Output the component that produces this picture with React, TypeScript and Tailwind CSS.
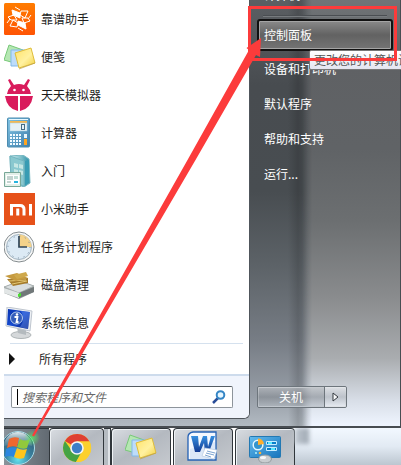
import React from 'react';

function KaopuIcon() {
  return (
    <svg viewBox="0 0 32 32" className="w-8 h-8">
      <defs>
        <linearGradient id="kaopu" x1="0" y1="0" x2="0" y2="1">
          <stop offset="0" stopColor="#ff7c00" />
          <stop offset="1" stopColor="#ff5404" />
        </linearGradient>
      </defs>
      <rect x="0" y="0" width="31" height="32" rx="1.5" fill="url(#kaopu)" />
      <g transform="translate(15 16)" stroke="#fff" strokeWidth="1" strokeLinejoin="round">
        <path d="M-7-9 1-6 1-1-6-4Z" fill="#fff" />
        <path d="M2-8 9-8 6-1 1-4Z" fill="none" />
        <path d="M7 10-1 6-1 2 6 4Z" fill="#fff" />
        <path d="M-2 8-9 7-6 1-1 4Z" fill="none" />
        <path d="M-11-2-5-4-2 1-8 1Z" fill="none" />
        <path d="M11 2 5 4 3-1 9-1Z" fill="none" />
        <path d="M-4-12 1-9M4 12l-5-3M12-4 9 0M-12 4l3-4" fill="none" />
      </g>
    </svg>
  );
}

function NotesIcon({ className = 'w-8 h-8' }: { className?: string }) {
  return (
    <svg viewBox="0 0 32 32" className={className}>
      <defs>
        <linearGradient id="noteYellow" x1="0" y1="0" x2="1" y2="1">
          <stop offset="0" stopColor="#ffe36b" />
          <stop offset=".55" stopColor="#fff1a0" />
          <stop offset="1" stopColor="#f3cf3d" />
        </linearGradient>
      </defs>
      <path d="M5 4 19 9 14 23 0 19Z" fill="#b5e7b2" stroke="#78c879" />
      <path d="M7 9H21V25H7Z" fill="#bddcfa" stroke="#83b9e8" />
      <path d="m11 12 16-5 4 15-16 5Z" fill="url(#noteYellow)" stroke="#dfbd39" />
      <path d="m15 28 16-6" stroke="#bda14b" strokeWidth=".7" />
    </svg>
  );
}

function BugIcon() {
  return (
    <svg viewBox="0 0 32 32" className="w-8 h-8" fill="#d91b5c">
      <path d="m4 1 2-1 4 6q5-2 10 0l4-6 2 1-3 6q3 3 4 8H3q1-5 4-8Z" />
      <path d="M1 17h13v15Q3 30 1 17ZM16 17h13q-2 13-13 15Z" />
      <circle cx="10.500" cy="11" r="1.300" fill="#fff" />
      <circle cx="19.500" cy="11" r="1.300" fill="#fff" />
    </svg>
  );
}

function CalculatorIcon() {
  return (
    <svg viewBox="0 0 32 32" className="w-8 h-8">
      <defs>
        <linearGradient id="calc" x1="0" y1="0" x2="1" y2="1">
          <stop offset="0" stopColor="#7fc3e4" />
          <stop offset="1" stopColor="#3f7fac" />
        </linearGradient>
      </defs>
      <rect x="3.500" y="1" width="22" height="29" rx="1" fill="url(#calc)" stroke="#4d8caf" />
      <path d="M5 2h19v1H5z" fill="#eaf9ff" />
      <rect x="6" y="4" width="17" height="2" fill="#f2b955" />
      <rect x="6" y="6" width="17" height="8" fill="#e5f1f6" stroke="#a6cddd" strokeWidth=".5" />
      <rect x="17.500" y="7.500" width="3" height="5" fill="none" stroke="#426c83" />
      <path d="M6 18h12M6 21h12M6 24h12M6 27h12" stroke="#f3fbff" strokeWidth="2" strokeDasharray="2 1" />
      <path d="M20 17h3v4h-3z" fill="#e9f6fc" />
      <path d="M20 22h3v6h-3z" fill="#ffa41f" />
    </svg>
  );
}

function GettingStartedIcon() {
  return (
    <svg viewBox="0 0 32 32" className="w-8 h-8">
      <defs>
        <linearGradient id="folder">
          <stop offset="0" stopColor="#d8f1f3" />
          <stop offset=".6" stopColor="#75bac5" />
          <stop offset="1" stopColor="#278ca7" />
        </linearGradient>
      </defs>
      <path d="M6 1 19 0 25 4 26 28 20 32 7 27Z" fill="url(#folder)" stroke="#78b8c2" />
      <path d="M6 1 20 6V31L7 26Z" fill="#8ac8cf" stroke="#73b4bf" />
      <path d="m10 8 4 1v4l-4-1zm5 1 4 1v4l-4-1zm-5 5 4 1v4l-4-1zm5 1 4 1v4l-4-1z" fill="#dff3ed" opacity=".7" />
      <path d="M21 6 25 5V27L21 31Z" fill="#389cb3" />
      <path d="M.5 17.500h16v14H.5z" fill="#e2efe8" stroke="#78a797" />
      <path d="M2 20h13v9H2z" fill="#fff" />
      <path d="M3 22h6M3 24h6M3 27h4" stroke="#87a8a0" />
      <path d="M10 21h4v3h-4z" fill="#bfddd4" />
      <path d="M10 26h4v2h-4z" fill="#26b4df" />
    </svg>
  );
}

function MiIcon() {
  return (
    <svg viewBox="0 0 32 32" className="w-8 h-8">
      <path d="M0 0h31v32H0z" fill="#e65119" />
      <path d="M7.500 22.500v-10H16q4 0 4 4v6M13.750 15.500v7M26.500 11v11.500" stroke="#fff" strokeWidth="3" fill="none" />
    </svg>
  );
}

function ClockIcon() {
  return (
    <svg viewBox="0 0 32 32" className="w-8 h-8">
      <circle cx="15" cy="16" r="15" fill="#f7f8f8" stroke="#848b8e" />
      <circle cx="15" cy="16" r="12.500" fill="#dceaf5" stroke="#a2b4c0" />
      <path d="M15 16V3.500A12.500 12.500 0 0 1 27.500 16Z" fill="#f4d28a" />
      <circle cx="15" cy="16" r="11" fill="none" stroke="#71869a" strokeWidth="1" strokeDasharray="1 4.760" />
      <path d="M15 5v11h8" fill="none" stroke="#304558" strokeWidth="1.700" />
    </svg>
  );
}

function DiskIcon() {
  return (
    <svg viewBox="0 0 32 32" className="w-8 h-8">
      <path d="m0 18 16-6 14 5v6l-15 7L0 24Z" fill="#969e9f" />
      <path d="m0 18 16-6 14 5-15 7Z" fill="#d9dedf" stroke="#a9b0b0" />
      <path d="m0 19 15 5v5L0 24Z" fill="#e2e6e6" />
      <path d="m15 24 15-6v5l-15 6Z" fill="#717879" />
      <path d="m14 25 3-1v3l-3 1Z" fill="#4be130" />
      <path d="m3 10 21-1v5L9 17Z" fill="#a67c2b" />
      <path d="M5 12 22 11M8 15l15-3" stroke="#e3c774" />
      <path d="m1 7 12-3 11 5-12 3Z" fill="#c69b40" />
      <path d="m10 6 12-3 2 4-11 3Z" fill="#cfa94c" />
    </svg>
  );
}

function SystemInfoIcon() {
  return (
    <svg viewBox="0 0 32 32" className="w-8 h-8">
      <defs>
        <linearGradient id="screen" x1="0" y1="0" x2="1" y2="1">
          <stop offset="0" stopColor="#0732b0" />
          <stop offset=".5" stopColor="#164bd0" />
          <stop offset="1" stopColor="#071c78" />
        </linearGradient>
      </defs>
      <ellipse cx="17" cy="28" rx="10" ry="3.500" fill="#d5d8da" stroke="#aeb4b6" />
      <path d="m13 20 9 2v6l-8-2Z" fill="#b4babe" />
      <path d="m3 0 25 4-2 20-24-5Z" fill="#edf0f4" stroke="#bec5ce" />
      <path d="m4 2 22 3-2 17-21-4Z" fill="url(#screen)" />
      <path d="m17 4 9 1-2 17-8-2q6-8 1-16Z" fill="#638ee8" opacity=".45" />
      <circle cx="12.500" cy="11" r="6" fill="#345dba" stroke="#b7ccec" />
      <circle cx="13" cy="7.500" r="1.300" fill="#fff" />
      <path d="M10.500 10h3l-1 5h2" fill="none" stroke="#fff" strokeWidth="1.800" />
    </svg>
  );
}

function StartOrb() {
  return (
    <svg viewBox="0 0 36 36" className="w-9 h-9">
      <defs>
        <radialGradient id="orb" cx=".5" cy=".85" r=".8">
          <stop offset="0" stopColor="#62e1ee" />
          <stop offset=".5" stopColor="#387f9d" />
          <stop offset="1" stopColor="#355a70" />
        </radialGradient>
        <linearGradient id="orbGloss" x1="0" y1="0" x2="0" y2="1">
          <stop offset="0" stopColor="#e4eef1" />
          <stop offset="1" stopColor="#8bafbd" stopOpacity=".25" />
        </linearGradient>
        <radialGradient id="orbGlow">
          <stop offset="0" stopColor="#5bea65" stopOpacity=".8" />
          <stop offset="1" stopColor="#5bea65" stopOpacity="0" />
        </radialGradient>
      </defs>
      <circle cx="14" cy="18" r="16.500" fill="url(#orb)" stroke="#a8dbe8" />
      <path d="M0 16a14 14 0 0 1 28 0q-14-4-28 0Z" fill="url(#orbGloss)" />
      <path d="M5 9q5-3 10-1l-2 9q-5-2-10 1Z" fill="#ef6730" />
      <path d="M16 9q5 3 10 0l-3 9q-4 2-10-1Z" fill="#92c83c" />
      <path d="M2 19q5-3 10-1l-2 9q-5-2-9 0Z" fill="#2b86df" />
      <path d="M13 18q5 3 10 1l-3 9q-5 2-10-1Z" fill="#ffc51c" />
      <circle cx="28" cy="8" r="8" fill="url(#orbGlow)" />
    </svg>
  );
}

function ChromeIcon() {
  return (
    <svg viewBox="0 0 32 32" className="w-8 h-8">
      <circle cx="16" cy="17" r="14" fill="#fbd02d" />
      <path d="M16 17 3.900 10A14 14 0 0 1 28.500 10.500H16Z" fill="#df4032" />
      <path d="M3.900 10A14 14 0 0 0 15 31l6-11-10 0Z" fill="#44a344" />
      <path d="M16 10.500h12.500A14 14 0 0 1 15 31l7-11Z" fill="#fbd02d" />
      <circle cx="16" cy="17" r="6.800" fill="#f5f5f5" />
      <circle cx="16" cy="17" r="5.200" fill="#3d7fc8" />
    </svg>
  );
}

function WordIcon() {
  return (
    <svg viewBox="0 0 32 32" className="w-8 h-8">
      <defs>
        <linearGradient id="word" x1="0" y1="0" x2="0" y2="1">
          <stop offset="0" stopColor="#368fe0" />
          <stop offset="1" stopColor="#123a92" />
        </linearGradient>
      </defs>
      <path d="M6 1h23v28H1V6q0-4 5-5Z" fill="#f4f8fe" stroke="#2461b4" strokeWidth="1.300" />
      <path d="M3 18 28 11v17H3Z" fill="#dce8f8" />
      <path d="M4 5h7l1 11 4-11h4l1 11 3-11h4l-6 16h-4l-1-9-4 9H8Z" fill="url(#word)" />
      <path d="m18 17 12 2-3 9-12-3Z" fill="#fff" stroke="#b9cbe1" strokeWidth=".7" />
      <path d="m20 20 8 2m-9 0 8 2m-9 0 6 2" stroke="#7da4d0" />
    </svg>
  );
}

function ControlPanelIcon() {
  return (
    <svg viewBox="0 0 32 32" className="w-8 h-8">
      <defs>
        <linearGradient id="panel" x1="0" y1="0" x2="1" y2="1">
          <stop offset="0" stopColor="#64bbed" />
          <stop offset="1" stopColor="#1674bd" />
        </linearGradient>
      </defs>
      <rect x=".5" y="5.500" width="31" height="21" rx="1" fill="url(#panel)" stroke="#2379b3" />
      <circle cx="9" cy="14" r="4.800" fill="#3394cd" stroke="#e3f7ff" strokeWidth="1.500" />
      <path d="M9 14V7.500q5 0 6 5.500Z" fill="#ffae2e" />
      <path d="M17.500 10.500h10v3h-10zM17.500 16.500h10v3h-10z" fill="#087fcc" stroke="#c8edff" />
      <path d="M19 12h4M22 18h4" stroke="#5aeaff" strokeWidth="2" />
      <circle cx="7" cy="22" r="1" fill="#b0f5ff" />
      <circle cx="11" cy="22" r="1.300" fill="#ffaf36" />
      <ellipse cx="16" cy="28" rx="6.500" ry="4" fill="#c9cdd0" stroke="#959b9e" />
      <ellipse cx="14" cy="26.500" rx="3" ry="1.500" fill="#f7f7f7" />
    </svg>
  );
}

const programs = [
  { name: '靠谱助手', Icon: KaopuIcon },
  { name: '便笺', Icon: NotesIcon },
  { name: '天天模拟器', Icon: BugIcon },
  { name: '计算器', Icon: CalculatorIcon },
  { name: '入门', Icon: GettingStartedIcon },
  { name: '小米助手', Icon: MiIcon },
  { name: '任务计划程序', Icon: ClockIcon },
  { name: '磁盘清理', Icon: DiskIcon },
  { name: '系统信息', Icon: SystemInfoIcon },
];

const places = ['设备和打印机', '默认程序', '帮助和支持', '运行...'];

const taskButton =
  'flex h-full items-start justify-center rounded-t-sm border border-b-0 border-[#30363b] bg-linear-to-br from-[#d9dde2] via-[#b4b9c0] to-[#c5c9ce] pt-0.5 shadow-[inset_1px_1px_0_#eef2f5]';

function ProgramList() {
  return (
    <section className="flex w-[246px] shrink-0 flex-col overflow-hidden rounded-br-md border-r border-b border-[#50565c] bg-white">
      <ul>
        {programs.map(({ name, Icon }) => (
          <li key={name}>
            <button className="flex h-[38px] w-full items-center gap-[5px] text-left">
              <Icon />
              {name}
            </button>
          </li>
        ))}
      </ul>
      <div className="mx-1.5 mt-px border-t border-[#d5e1ee]" />
      <button className="flex h-[30px] items-center gap-6 pl-[5px] text-left">
        <svg viewBox="0 0 6 12" className="h-3 w-1.5">
          <path d="M0 0 6 6 0 12Z" fill="#111" />
        </svg>
        所有程序
      </button>
      <div className="border-t-2 border-[#cddbec] bg-[#f0f4fc] px-[7px] pt-2.5 pb-2.5">
        <label className="flex h-[22px] w-[222px] items-center rounded-xs border border-[#8d949b] border-t-[#555c63] bg-white pr-1.5 pl-[5px]">
          <span className="mr-1 h-4 w-px bg-black" />
          <input
            aria-label="搜索程序和文件"
            placeholder="搜索程序和文件"
            className="min-w-0 flex-1 italic outline-none placeholder:text-[#686868]"
          />
          <svg viewBox="0 0 14 14" className="h-3.5 w-3.5" fill="none">
            <path d="m1 13 5-5" stroke="#294d98" strokeWidth="2.500" />
            <circle cx="8.500" cy="5" r="3.800" fill="#e6f6ff" stroke="#3485c5" strokeWidth="2" />
          </svg>
        </label>
      </div>
    </section>
  );
}

function PlacesList() {
  return (
    <section className="relative flex min-w-0 flex-1 flex-col px-[7px] text-white">
      <button className="-mt-[14px] h-[18px] pl-[7px] text-left leading-[18px]">计算机</button>
      <div className="mx-1.5 mt-[11px] border-t border-[#4a4e52] shadow-[0_1px_0_#777b7e]" />
      <button className="mt-[3px] h-8 rounded-[3px] border-2 border-[#111] bg-linear-to-b from-[#8a8a8a] from-0% via-[#626262] via-50% to-[#747474] pl-[5px] text-left shadow-[inset_0_0_0_1px_#a4a4a4]">
        控制面板
      </button>
      <div className="flex flex-col">
        {places.map((place) => (
          <button key={place} className="h-[35px] pl-[7px] text-left">
            {place}
          </button>
        ))}
      </div>
      <div className="mt-auto mb-[11px] flex h-[22px] w-[90px] rounded-xs border border-[#6d757c] shadow-[inset_0_0_0_1px_#d3d8de]">
        <button className="w-[67px] border-r border-[#6d757c] bg-linear-to-b from-[#c0c3c7]/60 via-[#858b92]/60 via-50% to-[#b7bec5]/60">
          关机
        </button>
        <button aria-label="关机选项" className="flex flex-1 items-center justify-center bg-linear-to-b from-white/40 via-[#858b92]/30 via-50% to-white/30">
          <svg viewBox="0 0 7 10" className="h-2.5 w-[7px]">
            <path d="M1 1v8l5-4Z" fill="#f9fafb" stroke="#33383e" />
          </svg>
        </button>
      </div>
      <div role="tooltip" className="absolute top-[50px] left-[59px] h-5 rounded-xs border border-[#777] bg-linear-to-b from-white to-[#e4e5f0] px-1 leading-[18px] whitespace-nowrap text-[#575757]">
        更改您的计算机设置
      </div>
    </section>
  );
}

function Taskbar() {
  return (
    <nav className="relative flex h-[37px] overflow-hidden">
      <button aria-label="开始" className="flex w-[45px] items-start border-t border-[#30363b] bg-linear-to-r from-[#8a939b] to-[#626a72] pt-px">
        <StartOrb />
      </button>
      <button aria-label="Chrome" className={`${taskButton} w-[55px]`}>
        <ChromeIcon />
      </button>
      <div className="w-[7px] border-t border-r border-[#30363b] bg-[#b5bbc1] shadow-[inset_-2px_0_0_#dfe3e7]" />
      <button aria-label="便笺" className={`${taskButton} w-[60px]`}>
        <NotesIcon />
      </button>
      <button aria-label="Word" className={`${taskButton} ml-0.5 w-[60px]`}>
        <WordIcon />
      </button>
      <button aria-label="控制面板" className={`${taskButton} ml-0.5 w-[60px]`}>
        <ControlPanelIcon />
      </button>
      <div className="flex-1 bg-linear-to-b from-[#f2f8ff] via-[#e2eaf3] to-[#bcc6d0]">
        <div className="h-4 w-3.5 bg-linear-to-r from-[#bfc7d0] to-[#9fa8b2] blur-[2px]" />
      </div>
    </nav>
  );
}

export default function App() {
  return (
    <main className="relative overflow-hidden bg-white pl-1 font-['Noto_Sans_CJK_SC','Noto_Sans',sans-serif] text-xs text-[#1e1e1e]">
      <div className="relative isolate flex border-r border-b-2 border-[#484d52] pb-[7px]">
        {/* glass: lit desktop on the right, dark window shadow on the left */}
        <div className="absolute inset-0 -z-10 bg-[linear-gradient(180deg,#707477_0%,#5f6164_15%,#606366_35%,#6c6f71_52%,#8a8c8e_70%,#a9acaf_84%,#d8dee7_94%,#eff5ff_100%)]" />
        <div className="absolute inset-y-0 left-0 -z-10 w-[308px] bg-[linear-gradient(180deg,#5b5f63_0%,#484c50_20%,#484d51_45%,#5c6267_62%,#777d85_80%,#979ea7_93%,#b2bac2_100%)] mask-[linear-gradient(90deg,#000_298px,transparent_308px)]" />
        <div className="absolute inset-y-0 left-[284px] -z-10 w-5 bg-linear-to-r from-transparent via-black/15 to-transparent" />
        <ProgramList />
        <PlacesList />
      </div>
      <Taskbar />
      <div className="pointer-events-none absolute top-1.5 left-[248px] h-[55px] w-[149px] border-[3px] border-[#fc3b3b]" />
      <svg viewBox="0 0 401 465" className="pointer-events-none absolute top-0 left-0 h-[465px] w-[401px]">
        <path d="M32 435.500 34 436.500 195.500 160 256 55l4 2L261 38 246.500 48l2.500 2L187.500 160Z" fill="#fc3b3b" />
      </svg>
    </main>
  );
}
